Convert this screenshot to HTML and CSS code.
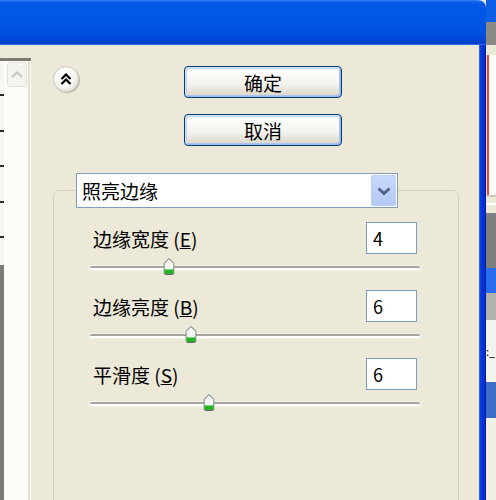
FILE: index.html
```html
<!DOCTYPE html>
<html lang="zh-CN">
<head>
    <meta charset="UTF-8">
    <meta name="viewport" content="width=device-width, initial-scale=1.0">
    <title>照亮边缘</title>
    <link rel="stylesheet" href="styles.css">
</head>
<body>
    <div class="screen">
        <div class="window">
            <div class="titlebar"></div>
            <div class="window-main">
                <div class="client">
                    <!-- filter list (cut off on the left) -->
                    <div class="list-pane">
                        <div class="list-edge">
                            <div class="edge-rows"></div>
                            <div class="edge-dark"></div>
                        </div>
                        <div class="scrollbar">
                            <div class="scroll-up">
                                <svg width="12" height="7" viewBox="0 0 12 7"><path d="M1 6 L6 1.5 L11 6" fill="none" stroke="#c9c7bd" stroke-width="2.2"/></svg>
                            </div>
                        </div>
                        <div class="pane-border"></div>
                    </div>

                    <div class="settings">
                        <div class="top-row">
                            <button class="collapse" title="收起">
                                <svg width="12" height="12" viewBox="0 0 12 12"><path d="M1.5 6 L6 1.5 L10.5 6 M1.5 11 L6 6.5 L10.5 11" fill="none" stroke="#000" stroke-width="2.2"/></svg>
                            </button>
                            <div class="actions">
                                <button class="btn">确定</button>
                                <button class="btn">取消</button>
                            </div>
                        </div>

                        <div class="filter-group">
                            <div class="filter-select">
                                <span>照亮边缘</span>
                                <span class="select-arrow">
                                    <svg width="14" height="8" viewBox="0 0 14 8"><path d="M1.5 1.5 L7 6.5 L12.5 1.5" fill="none" stroke="#4d6185" stroke-width="2.8"/></svg>
                                </span>
                            </div>

                            <div class="group">
                                <div class="param">
                                    <div class="param-head">
                                        <label class="param-label" for="width">边缘宽度 (<u>E</u>)</label>
                                        <input class="param-value" id="width" type="text" value="4">
                                    </div>
                                    <div class="slider">
                                        <div class="track"></div>
                                        <svg class="thumb" style="--p: 0.2308" width="11" height="17" viewBox="0 0 11 17"><path d="M5.5 0.5 L10.5 5.5 V14.5 Q10.5 16.5 8.5 16.5 H2.5 Q0.5 16.5 0.5 14.5 V5.5 Z" fill="#f4f4f0" stroke="#5d6a66"/><path d="M1 11 H10 V14.5 Q10 16 8.5 16 H2.5 Q1 16 1 14.5 Z" fill="#27b027"/><path d="M2 11.5 H9" stroke="#7fe07f"/></svg>
                                    </div>
                                </div>
                                <div class="param">
                                    <div class="param-head">
                                        <label class="param-label" for="bright">边缘亮度 (<u>B</u>)</label>
                                        <input class="param-value" id="bright" type="text" value="6">
                                    </div>
                                    <div class="slider">
                                        <div class="track"></div>
                                        <svg class="thumb" style="--p: 0.3" width="11" height="17" viewBox="0 0 11 17"><path d="M5.5 0.5 L10.5 5.5 V14.5 Q10.5 16.5 8.5 16.5 H2.5 Q0.5 16.5 0.5 14.5 V5.5 Z" fill="#f4f4f0" stroke="#5d6a66"/><path d="M1 11 H10 V14.5 Q10 16 8.5 16 H2.5 Q1 16 1 14.5 Z" fill="#27b027"/><path d="M2 11.5 H9" stroke="#7fe07f"/></svg>
                                    </div>
                                </div>
                                <div class="param">
                                    <div class="param-head">
                                        <label class="param-label" for="smooth">平滑度 (<u>S</u>)</label>
                                        <input class="param-value" id="smooth" type="text" value="6">
                                    </div>
                                    <div class="slider">
                                        <div class="track"></div>
                                        <svg class="thumb" style="--p: 0.3571" width="11" height="17" viewBox="0 0 11 17"><path d="M5.5 0.5 L10.5 5.5 V14.5 Q10.5 16.5 8.5 16.5 H2.5 Q0.5 16.5 0.5 14.5 V5.5 Z" fill="#f4f4f0" stroke="#5d6a66"/><path d="M1 11 H10 V14.5 Q10 16 8.5 16 H2.5 Q1 16 1 14.5 Z" fill="#27b027"/><path d="M2 11.5 H9" stroke="#7fe07f"/></svg>
                                    </div>
                                </div>
                            </div>
                        </div>
                    </div>
                </div>
                <div class="frame"></div>
            </div>
        </div>

        <!-- bits of the window behind -->
        <div class="backdrop">
            <div class="bd bd-blue"></div>
            <div class="bd bd-gray"></div>
            <div class="bd bd-beige"></div>
            <div class="bd bd-red"></div>
            <div class="bd bd-lines"></div>
            <div class="bd bd-dark"></div>
            <div class="bd bd-sel"></div>
            <div class="bd bd-mid"></div>
            <div class="bd bd-text">:_</div>
            <div class="bd bd-band"></div>
            <div class="bd bd-rest"></div>
        </div>
    </div>
</body>
</html>
```

FILE: styles.css
```css
body {
    margin: 0;
    background-color: #ece9d8;
    font-family: "Noto Sans CJK SC", "Noto Sans", sans-serif;
    color: #000;
}

.screen {
    width: 496px;
    height: 500px;
    display: grid;
    grid-template-columns: 486px 10px;
    overflow: hidden;
}

.window {
    display: flex;
    flex-direction: column;
    min-height: 0;
}

.titlebar {
    flex: none;
    height: 45px;
    border-top-right-radius: 8px;
    background: linear-gradient(#3b86f5 0, #0b5ee9 2px, #0157e6 6px, #0054e3 28px, #004ad9 38px, #003ec8 44px, #2d6ce6 44px);
}

.window-main {
    flex: 1;
    display: grid;
    grid-template-columns: 479px 7px;
    min-height: 0;
}

.client {
    display: grid;
    grid-template-columns: 31px 448px;
    background-color: #ece9d8;
    overflow: hidden;
}

.frame {
    background: linear-gradient(to right, #2a62e4 0 1px, #0a3ce0 1px 3px, #0530d4 3px 6px, #001e9c 6px);
}

/* left list */
.list-pane {
    margin-top: 13px;
    border-top: 3px solid #7c7a72;
    display: flex;
}

.list-edge {
    width: 4px;
    display: flex;
    flex-direction: column;
}

.edge-rows {
    height: 204px;
    background: repeating-linear-gradient(#f7f6f0 0 33px, #2a2a2a 33px 35px, #f7f6f0 35px 35.5px);
}

.edge-dark {
    flex: 1;
    background-color: #7a7a78;
}

.scrollbar {
    width: 24px;
    box-sizing: border-box;
    padding: 1px 1px 0 3px;
    background-color: #fcfcf9;
}

.scroll-up {
    width: 20px;
    height: 25px;
    box-sizing: border-box;
    border: 1px solid #e2dfd4;
    border-radius: 3px;
    background-color: #f4f3ee;
    display: flex;
    align-items: center;
    justify-content: center;
}

.pane-border {
    width: 3px;
    background: linear-gradient(to right, #e3e0d1 0 2px, #faf9f4 2px);
}

/* right side */
.settings {
    padding-top: 21px;
}

.top-row {
    display: flex;
    align-items: flex-start;
}

.collapse {
    width: 26px;
    height: 26px;
    margin-left: 22px;
    padding: 0;
    border: 1px solid #cfccbf;
    border-radius: 50%;
    background: radial-gradient(circle at 40% 35%, #fff 0, #f6f5f0 50%, #d9d6c9 100%);
    box-shadow: 1px 1px 1px #b5b2a4;
    display: flex;
    align-items: center;
    justify-content: center;
}

.actions {
    display: flex;
    flex-direction: column;
    gap: 16px;
    margin-left: 105px;
}

.btn {
    width: 158px;
    height: 32px;
    padding: 0;
    border: 1px solid #003c74;
    border-radius: 4px;
    background: linear-gradient(#ffffff, #f5f4ef 55%, #d9d4c8);
    box-shadow: inset 1px 1px 0 #d4e6fd, inset -1px -1px 0 #9bb8ec, inset 2px 2px 0 #c2d6f7, inset -2px -2px 0 #aac3ef;
    font: 19px "Noto Sans CJK SC", sans-serif;
    color: #000;
}

.filter-group {
    margin: 27px 0 0 22px;
    width: 406px;
}

.filter-select {
    position: relative;
    z-index: 1;
    margin-left: 23px;
    width: 322px;
    height: 35px;
    box-sizing: border-box;
    border: 1px solid #7f9db9;
    background-color: #fff;
    padding: 0 1px 0 5px;
    display: flex;
    align-items: center;
    justify-content: space-between;
    font-size: 19px;
}

.select-arrow {
    width: 25px;
    height: 31px;
    border-radius: 2px;
    background: linear-gradient(#c9d9fc, #b2c8f6);
    box-shadow: inset 0 0 0 1px #bfd0f6;
    display: flex;
    align-items: center;
    justify-content: center;
}

.group {
    margin-top: -18px;
    height: 330px;
    border: 1px solid #d0d0bf;
    border-radius: 6px;
    padding: 31px 38px 0 36px;
}

.param-head {
    height: 32px;
    display: flex;
    align-items: center;
    justify-content: space-between;
}

.param-label {
    margin-left: 3px;
    font-size: 19px;
}

.param-value {
    width: 51px;
    height: 32px;
    box-sizing: border-box;
    margin: 0 3px 0 0;
    padding: 0 0 0 6px;
    border: 1px solid #7f9db9;
    background-color: #fff;
    font: 18px "Noto Sans CJK SC", sans-serif;
    color: #000;
}

.slider {
    position: relative;
    height: 36px;
    box-sizing: border-box;
    padding-top: 12px;
}

.track {
    height: 4px;
    border-radius: 2px;
    background: linear-gradient(#a6a59d 0 2px, #fff 2px);
    box-shadow: 0 0 0 1px #f3f2ea;
}

/* thumb position comes from --p (value within range) */
.thumb {
    position: absolute;
    top: 4px;
    left: calc(5px + var(--p) * (100% - 10px));
    transform: translateX(-50%);
}

/* window behind, right edge */
.backdrop {
    display: flex;
    flex-direction: column;
}

.bd {
    flex: none;
}

.bd-blue { height: 22px; background-color: #0d5fe6; }
.bd-gray { height: 23px; background-color: #8b8a86; }
.bd-beige { height: 10px; background-color: #ece9d8; }
.bd-red { height: 140px; background: linear-gradient(to right, #d8d6cc 0 1px, #e8483a 1px 3px, #fbfbf8 3px); }
.bd-lines { height: 18px; background: linear-gradient(#cfccbf 0 2px, #ece9d8 2px 8px, #fff 8px 10px, #ece9d8 10px); }
.bd-dark { height: 55px; background-color: #7e7e7e; }
.bd-sel { height: 25px; background-color: #2a6cef; }
.bd-mid { height: 27px; background-color: #b2b1ad; }
.bd-text {
    height: 62px;
    background-color: #f3f2ec;
    font-size: 11px;
    line-height: 62px;
    overflow: hidden;
}
.bd-band { height: 36px; background-color: #3d6dc6; }
.bd-rest { height: 82px; background-color: #f1efe6; }
```
